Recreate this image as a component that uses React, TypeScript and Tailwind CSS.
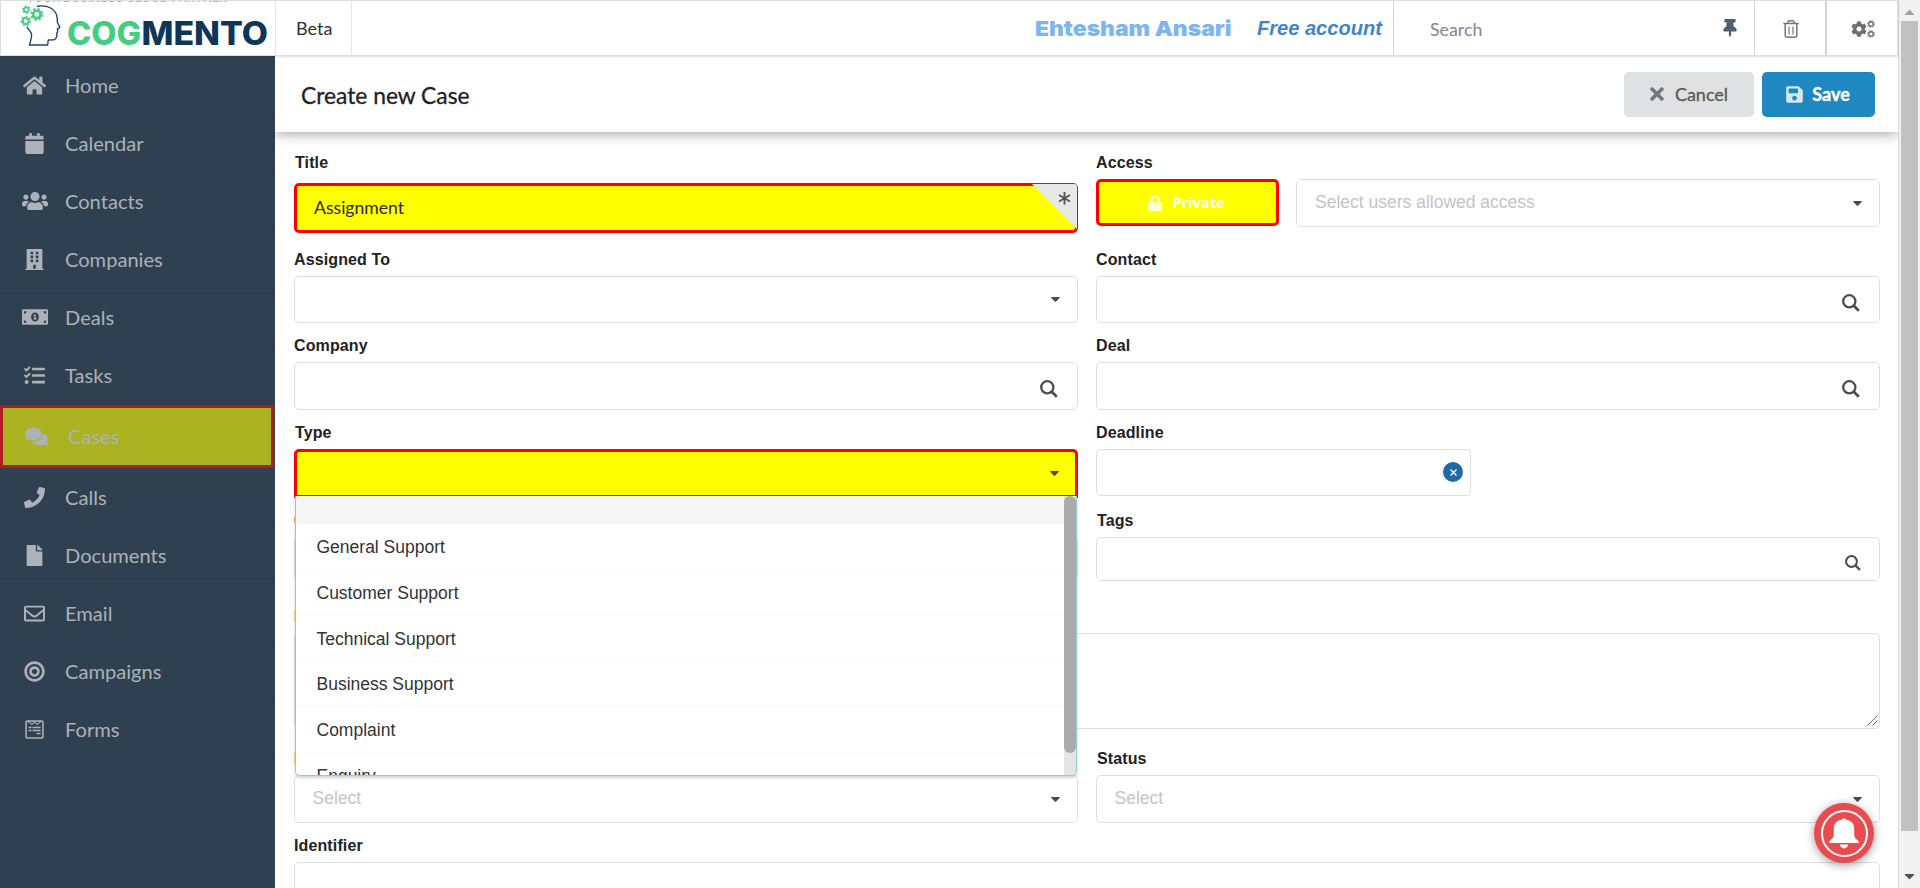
import React from "react";
import {
  FaHome, FaCalendar, FaUsers, FaBuilding, FaMoneyBillAlt, FaTasks, FaComments, FaPhone, FaFile,
  FaRegEnvelope, FaBullseye, FaWpforms, FaThumbtack, FaTimes, FaSave, FaLock,
  FaCaretDown, FaCaretUp, FaCog,
} from "react-icons/fa";

const nav = [
  { label: "Home", Icon: FaHome, size: 23, shift: "pb-px" },
  { label: "Calendar", Icon: FaCalendar, size: 21, shift: "pb-px" },
  { label: "Contacts", Icon: FaUsers, size: 26, shift: "pb-px" },
  { label: "Companies", Icon: FaBuilding, size: 21, shift: "pb-px" },
  { label: "Deals", Icon: FaMoneyBillAlt, size: 26, shift: "pb-px" },
  { label: "Tasks", Icon: FaTasks, size: 21, shift: "pb-px" },
  { label: "Cases", Icon: FaComments, size: 23, active: true, shift: "" },
  { label: "Calls", Icon: FaPhone, size: 21, shift: "pt-[2px]" },
  { label: "Documents", Icon: FaFile, size: 21, shift: "pt-[2px]" },
  { label: "Email", Icon: FaRegEnvelope, size: 21, shift: "pt-[2px]" },
  { label: "Campaigns", Icon: FaBullseye, size: 21, shift: "pt-[2px]" },
  { label: "Forms", Icon: FaWpforms, size: 21, shift: "pt-[2px]" },
];

const box = "relative flex items-center rounded-[5px] border border-[#dededf] bg-white";

function Label({ children, indent = false }: { children: React.ReactNode; indent?: boolean }) {
  return (
    <div className={"h-[18px] pt-px text-[16px] font-bold leading-[18px] tracking-[0.12px] text-[#212223] " + (indent ? "pl-px" : "")}>
      {children}
    </div>
  );
}

function Caret({ className = "text-[#4c4c4c]" }: { className?: string }) {
  return (
    <svg className={"ml-auto h-[5px] w-[9px] " + className} viewBox="0 0 9 5">
      <path d="M0.4 0H8.6Q9 0.6 8.6 1.1L5.2 4.6Q4.5 5.2 3.8 4.6L0.4 1.1Q0 0.6 0.4 0Z" fill="currentColor" />
    </svg>
  );
}

function SearchIcon({ className = "h-[18px] w-[18px]" }: { className?: string }) {
  return (
    <svg className={"ml-auto text-[#4c4c4c] " + className} viewBox="0 0 18 18" fill="none" stroke="currentColor">
      <circle cx="7.3" cy="7.3" r="6.1" strokeWidth="2.3" />
      <path d="M11.8 11.8L16.8 16.8" strokeWidth="2.7" />
    </svg>
  );
}

function SmallCog() {
  return (
    <svg className="h-2 w-2" viewBox="0 0 8 8" fill="none" stroke="currentColor">
      <circle cx="4" cy="4" r="2.3" strokeWidth="1.4" />
      <circle cx="4" cy="4" r="3.4" strokeWidth="1" strokeDasharray="1.3 1.37" />
    </svg>
  );
}

function TrashIcon() {
  return (
    <svg className="ml-px mt-[2px] h-[18px] w-[16px]" viewBox="0 0 16 18" fill="none" stroke="currentColor" strokeWidth="1.5">
      <path d="M0.3 3.6H15.7M4.6 3.4L5.4 1Q5.6 0.8 6 0.8H10Q10.4 0.8 10.6 1L11.4 3.4" />
      <path d="M2.2 3.8V15.6Q2.2 17.2 3.8 17.2H12.2Q13.8 17.2 13.8 15.6V3.8" />
      <path d="M6 6.6V14.4M10 6.6V14.4" strokeWidth="1.2" />
    </svg>
  );
}

function Logo() {
  return (
    <svg className="h-[54px] w-[274px]" viewBox="1 1 274 54">
      <text x="26" y="1.6" textLength="201" fontFamily="Inter, sans-serif" fontWeight="600" fontSize="12" fill="#6fd79c">YOUR BUSINESS CLOUD PARTNER</text>
      <path
        d="M37.5 6.2C48 4.8 56.5 9 57.3 18.5L57.4 22.5L59.8 27C60 28 58.5 28.6 57.5 28.8L57.6 32.2L56.6 33.4L57 34.8C56.6 37.5 56 39.5 53.5 39.7L48.3 40L47.6 45H29.5C31 40 32 36.5 31.5 34C30.8 31 28.5 30 27.3 27.3"
        fill="none" stroke="#1c456a" strokeWidth="1.4" strokeLinejoin="round" strokeLinecap="round"
      />
      <g fill="none" stroke="#45cd82">
        <circle cx="26.3" cy="9.7" r="2.4" strokeWidth="1.7" />
        <circle cx="26.3" cy="9.7" r="3.7" strokeWidth="1.3" strokeDasharray="1.7 2.17" />
        <circle cx="36.8" cy="14.4" r="3.7" strokeWidth="2.5" />
        <circle cx="36.8" cy="14.4" r="5.5" strokeWidth="1.9" strokeDasharray="2.4 1.92" />
        <circle cx="25.8" cy="21" r="3" strokeWidth="2" />
        <circle cx="25.8" cy="21" r="4.6" strokeWidth="1.5" strokeDasharray="1.9 2.23" />
      </g>
      <text x="67" y="44.5" textLength="74" lengthAdjust="spacingAndGlyphs" fontFamily="Inter, sans-serif" fontWeight="800" fontSize="32" fill="#45cd82">COG</text>
      <text x="141.5" y="44.5" textLength="126.5" lengthAdjust="spacingAndGlyphs" fontFamily="Inter, sans-serif" fontWeight="800" fontSize="32" fill="#0f3557">MENTO</text>
    </svg>
  );
}

function TopBar() {
  return (
    <header className="relative z-20 flex h-14 w-[1898px] border border-[#dedede] bg-white shadow-[0_1px_2px_rgba(34,36,38,0.15)]">
      <div className="w-[274px]"><Logo /></div>
      <div className="flex w-[77px] items-center border-x border-[#e6e6e7] pl-[20px] pt-px font-['Lato'] text-[18px] text-[#303030]">Beta</div>
      <div className="flex flex-1 items-center justify-end border-r border-[#d4d4d5] pr-[11px]">
        <svg className="mr-[25px] h-[26px] w-[197px]" viewBox="0 0 197 26">
          <text x="0" y="21" textLength="196.5" lengthAdjust="spacingAndGlyphs" fontFamily="Inter, sans-serif" fontWeight="900" fontSize="20.5" fill="#7db5ee">Ehtesham Ansari</text>
        </svg>
        <span className="whitespace-nowrap text-[20.1px] font-bold italic text-[#4284ca]">Free account</span>
      </div>
      <div className="flex w-[361px] items-center justify-between border-r border-[#d4d4d5] pl-[36px] pr-[15px]">
        <span className="mt-[3px] font-['Lato'] text-[17.8px] text-[#868686]">Search</span>
        <FaThumbtack className="text-[#4e5f6e]" size={18} />
      </div>
      <div className="flex w-[71px] items-center justify-center border-r border-[#d4d4d5] text-[#777]"><TrashIcon /></div>
      <div className="flex w-[71px] items-center justify-center border-l border-[#d4d4d5] pl-[2px] pt-[2px] text-[#707070]">
        <FaCog size={16} />
        <span className="flex flex-col gap-[2px]"><SmallCog /><SmallCog /></span>
      </div>
    </header>
  );
}

function Sidebar() {
  return (
    <nav className="w-[275px] shrink-0 bg-[#2f4050] pt-px">
      {nav.map(({ label, Icon, size, active, shift }) => (
        <div
          key={label}
          className={
            "flex items-center font-['Lato'] text-[20.1px] text-[#abb2b9] " +
            (active
              ? "h-[63px] w-[274px] border-[3px] border-[#b01c1f] bg-[#abb221] pl-[19px] "
              : "h-[58px] border-b border-[#2d3d4c] pl-[20px] ") +
            shift
          }
        >
          <span className="flex w-[29px] justify-center"><Icon size={size} /></span>
          <span className={active ? "ml-[17px]" : "ml-[16px]"}>{label}</span>
        </div>
      ))}
    </nav>
  );
}

function TypeMenu() {
  return (
    <div className="absolute left-[-2px] top-[44px] z-10 flex h-[280px] w-[782px] overflow-hidden rounded-b-[5px] border border-t-0 border-[#96c8da] bg-white shadow-[0_2px_3px_rgba(34,36,38,0.2)]">
      <div className="flex-1 text-[17.5px] text-[#333]">
        <div className="h-[28px] bg-[#f6f6f6]" />
        {["General Support", "Customer Support", "Technical Support", "Business Support", "Complaint", "Enquiry"].map((t) => (
          <div key={t} className="flex h-[45.8px] items-center border-b border-[#fafafa] pl-[20.5px] pt-[1.4px]">{t}</div>
        ))}
      </div>
      <div className="w-[12px] bg-[#e5e5e5]"><div className="h-[257px] rounded-[6px] bg-[#ababab]" /></div>
    </div>
  );
}

function Form() {
  return (
    <div className="flex flex-col overflow-hidden pl-[19px] pt-[21px]">
      <div className="grid w-[1586px] grid-cols-2 gap-x-[18px]">
        <div className="h-[97px]">
          <Label indent>Title</Label>
          <div className="relative mt-[12px] flex h-[50px] items-center rounded-[5px] border-[3px] border-[#f00] bg-[#ff0] pl-[17px] font-['Lato'] text-[17.6px] text-[#2a2a10]">
            <span>Assignment</span>
            <svg className="absolute right-[-2px] top-[-2px] h-[45px] w-[45px]" viewBox="0 0 45 45">
              <path d="M0 0H42Q45 0 45 3V45Z" fill="#e8e8e8" />
              <path d="M32.5 8V20.5M27 11L38 17.5M38 11L27 17.5" stroke="#555" strokeWidth="1.9" />
            </svg>
          </div>
        </div>
        <div className="h-[97px]">
          <Label>Access</Label>
          <div className="mt-[8px] flex gap-[17px]">
            <button className="flex h-[47px] w-[183px] items-center justify-center rounded-[5px] border-[3px] border-[#f00] bg-[#ff0] pr-[3px] font-['Open_Sans'] text-[14.6px] font-bold text-white">
              <FaLock size={16} className="mr-[9px] opacity-80" />Private
            </button>
            <div className={box + " h-[48px] flex-1 pl-[18px] pr-[17px] text-[17.5px] text-[#c4c4c4]"}>
              <span className="-mt-[2px]">Select users allowed access</span><Caret />
            </div>
          </div>
        </div>

        <div className="h-[86px]">
          <Label>Assigned To</Label>
          <div className={box + " mt-[8px] h-[47px] pr-[17px]"}><Caret /></div>
        </div>
        <div className="h-[86px]">
          <Label>Contact</Label>
          <div className={box + " mt-[8px] h-[47px] pr-[19px]"}><SearchIcon className="mt-[7px] h-[18px] w-[18px]" /></div>
        </div>

        <div className="h-[87px]">
          <Label>Company</Label>
          <div className={box + " mt-[8px] h-[48px] pr-[19px]"}><SearchIcon className="mt-[6px] h-[18px] w-[18px]" /></div>
        </div>
        <div className="h-[87px]">
          <Label>Deal</Label>
          <div className={box + " mt-[8px] h-[48px] pr-[19px]"}><SearchIcon className="mt-[6px] h-[18px] w-[18px]" /></div>
        </div>

        <div className="h-[88px]">
          <Label indent>Type</Label>
          <div className="relative mt-[8px] flex h-[49px] items-center rounded-t-[5px] border-[3px] border-[#f00] bg-[#ff0] pr-[16px]">
            <Caret className="text-[#4c4c10]" />
            <TypeMenu />
          </div>
        </div>
        <div className="h-[88px]">
          <Label>Deadline</Label>
          <div className={box + " mt-[8px] h-[47px] w-[375px] pr-[7px]"}>
            <span className="-mt-px ml-auto flex h-5 w-5 items-center justify-center rounded-full bg-[#1f6aa5] text-white">
              <svg className="h-[7px] w-[7px]" viewBox="0 0 7 7" stroke="currentColor" strokeWidth="1.3"><path d="M0.5 0.5L6.5 6.5M6.5 0.5L0.5 6.5" /></svg>
            </span>
          </div>
        </div>

        <div className="h-[96px] pt-[6px]">
          <div className="h-[6px] w-px bg-[#f0b070]" />
          <div className={box + " mt-[14px] h-[44px]"} />
        </div>
        <div className="h-[96px]">
          <Label indent>Tags</Label>
          <div className={box + " mt-[8px] h-[44px] pr-[18px]"}><SearchIcon className="mt-[7px] h-[16px] w-[16px]" /></div>
        </div>

        <div className="col-span-2 h-[142px] pt-[3px]">
          <div className="h-[12px] w-px bg-[#f5d08c]" />
          <div className={box + " mt-[11px] h-[96px]"}>
            <svg className="absolute bottom-[2px] right-px h-[11px] w-[11px]" viewBox="0 0 11 11" stroke="#555" strokeWidth="0.9"><path d="M0.5 10.5L10.5 0.5M5.5 10.5L10.5 5.5" /></svg>
          </div>
        </div>

        <div className="h-[87px] pt-[3px]">
          <div className="h-[12px] w-px bg-[#f5d08c]" />
          <div className={box + " mt-[11px] h-[48px] pl-[17.5px] pr-[17px] text-[17.5px] text-[#c4c4c4]"}>
            <span className="-mt-[2px]">Select</span><Caret />
          </div>
        </div>
        <div className="h-[87px]">
          <Label indent>Status</Label>
          <div className={box + " mt-[8px] h-[48px] pl-[17.5px] pr-[17px] text-[17.5px] text-[#c4c4c4]"}>
            <span className="-mt-[2px]">Select</span><Caret />
          </div>
        </div>

        <div className="col-span-2">
          <Label>Identifier</Label>
          <div className={box + " mt-[8px] h-[48px]"} />
        </div>
      </div>
    </div>
  );
}

function PageScrollbar() {
  return (
    <div className="flex w-[21px] flex-col items-center bg-[#f1f1f1] pl-px pr-[2px]">
      <FaCaretUp className="mt-[4px] h-[16px] w-[15px] shrink-0 text-[#a2a2a2]" />
      <div className="mt-px h-[810px] w-[17px] shrink-0 bg-[#c1c1c1]" />
      <FaCaretDown className="mt-[37px] h-[16px] w-[15px] shrink-0 text-[#505050]" />
    </div>
  );
}

export default function App() {
  return (
    <div className="relative flex h-[888px] w-[1920px] overflow-hidden bg-white font-['Liberation_Sans',sans-serif]">
      <div className="flex w-[1899px] flex-col border-r border-[#d8d8d8]">
        <TopBar />
        <div className="flex min-h-0 flex-1">
          <Sidebar />
          <main className="flex min-w-0 flex-1 flex-col">
            <div className="z-10 flex h-[76px] shrink-0 items-center bg-white pl-[26px] pr-[23px] shadow-[0_2px_12px_rgba(0,0,0,0.36)] [clip-path:inset(0_0_-20px_0)]">
              <h1 className="mt-[3px] font-['Lato'] text-[22.8px] text-[#212223] [-webkit-text-stroke:0.3px_#212223]">Create new Case</h1>
              <button className="ml-auto flex h-[45px] w-[130px] items-center justify-center rounded-[5px] bg-[#e0e1e2] pr-[3px] font-['Lato'] text-[18px] text-[#5a5a5a] [-webkit-text-stroke:0.3px_#5a5a5a]">
                <FaTimes className="mr-[8px] text-[#777]" size={20} />Cancel
              </button>
              <button className="ml-[8px] flex h-[45px] w-[113px] items-center justify-center rounded-[5px] bg-[#2088c0] pr-[2px] font-['Lato'] text-[18px] font-bold text-white [-webkit-text-stroke:0.4px_white]">
                <FaSave className="mr-[8px] opacity-80" size={19} />Save
              </button>
            </div>
            <Form />
          </main>
        </div>
      </div>
      <PageScrollbar />
      <div className="absolute left-[1814px] top-[803px] z-30 flex h-[60px] w-[60px] items-center justify-center rounded-full bg-[#e84c4f] shadow-[0_2px_10px_rgba(0,0,0,0.4)]">
        <div className="flex h-[47px] w-[47px] items-center justify-center rounded-full border-2 border-white text-white">
          <svg className="h-[31px] w-[30px]" viewBox="0 0 30 31" fill="currentColor">
            <path d="M12.6 1.8Q13 0.4 15 0.4T17.4 1.8C22.5 2.6 25.2 6 25.2 10.5V16C25.2 19.5 26.5 20.5 29.4 23Q30.2 25 29 25H1Q-0.2 25 0.6 23C3.5 20.5 4.8 19.5 4.8 16V10.5C4.8 6 7.5 2.6 12.6 1.8Z" />
            <path d="M10.8 26.6H19.2Q18.4 30.4 15 30.4T10.8 26.6Z" />
          </svg>
        </div>
      </div>
    </div>
  );
}
